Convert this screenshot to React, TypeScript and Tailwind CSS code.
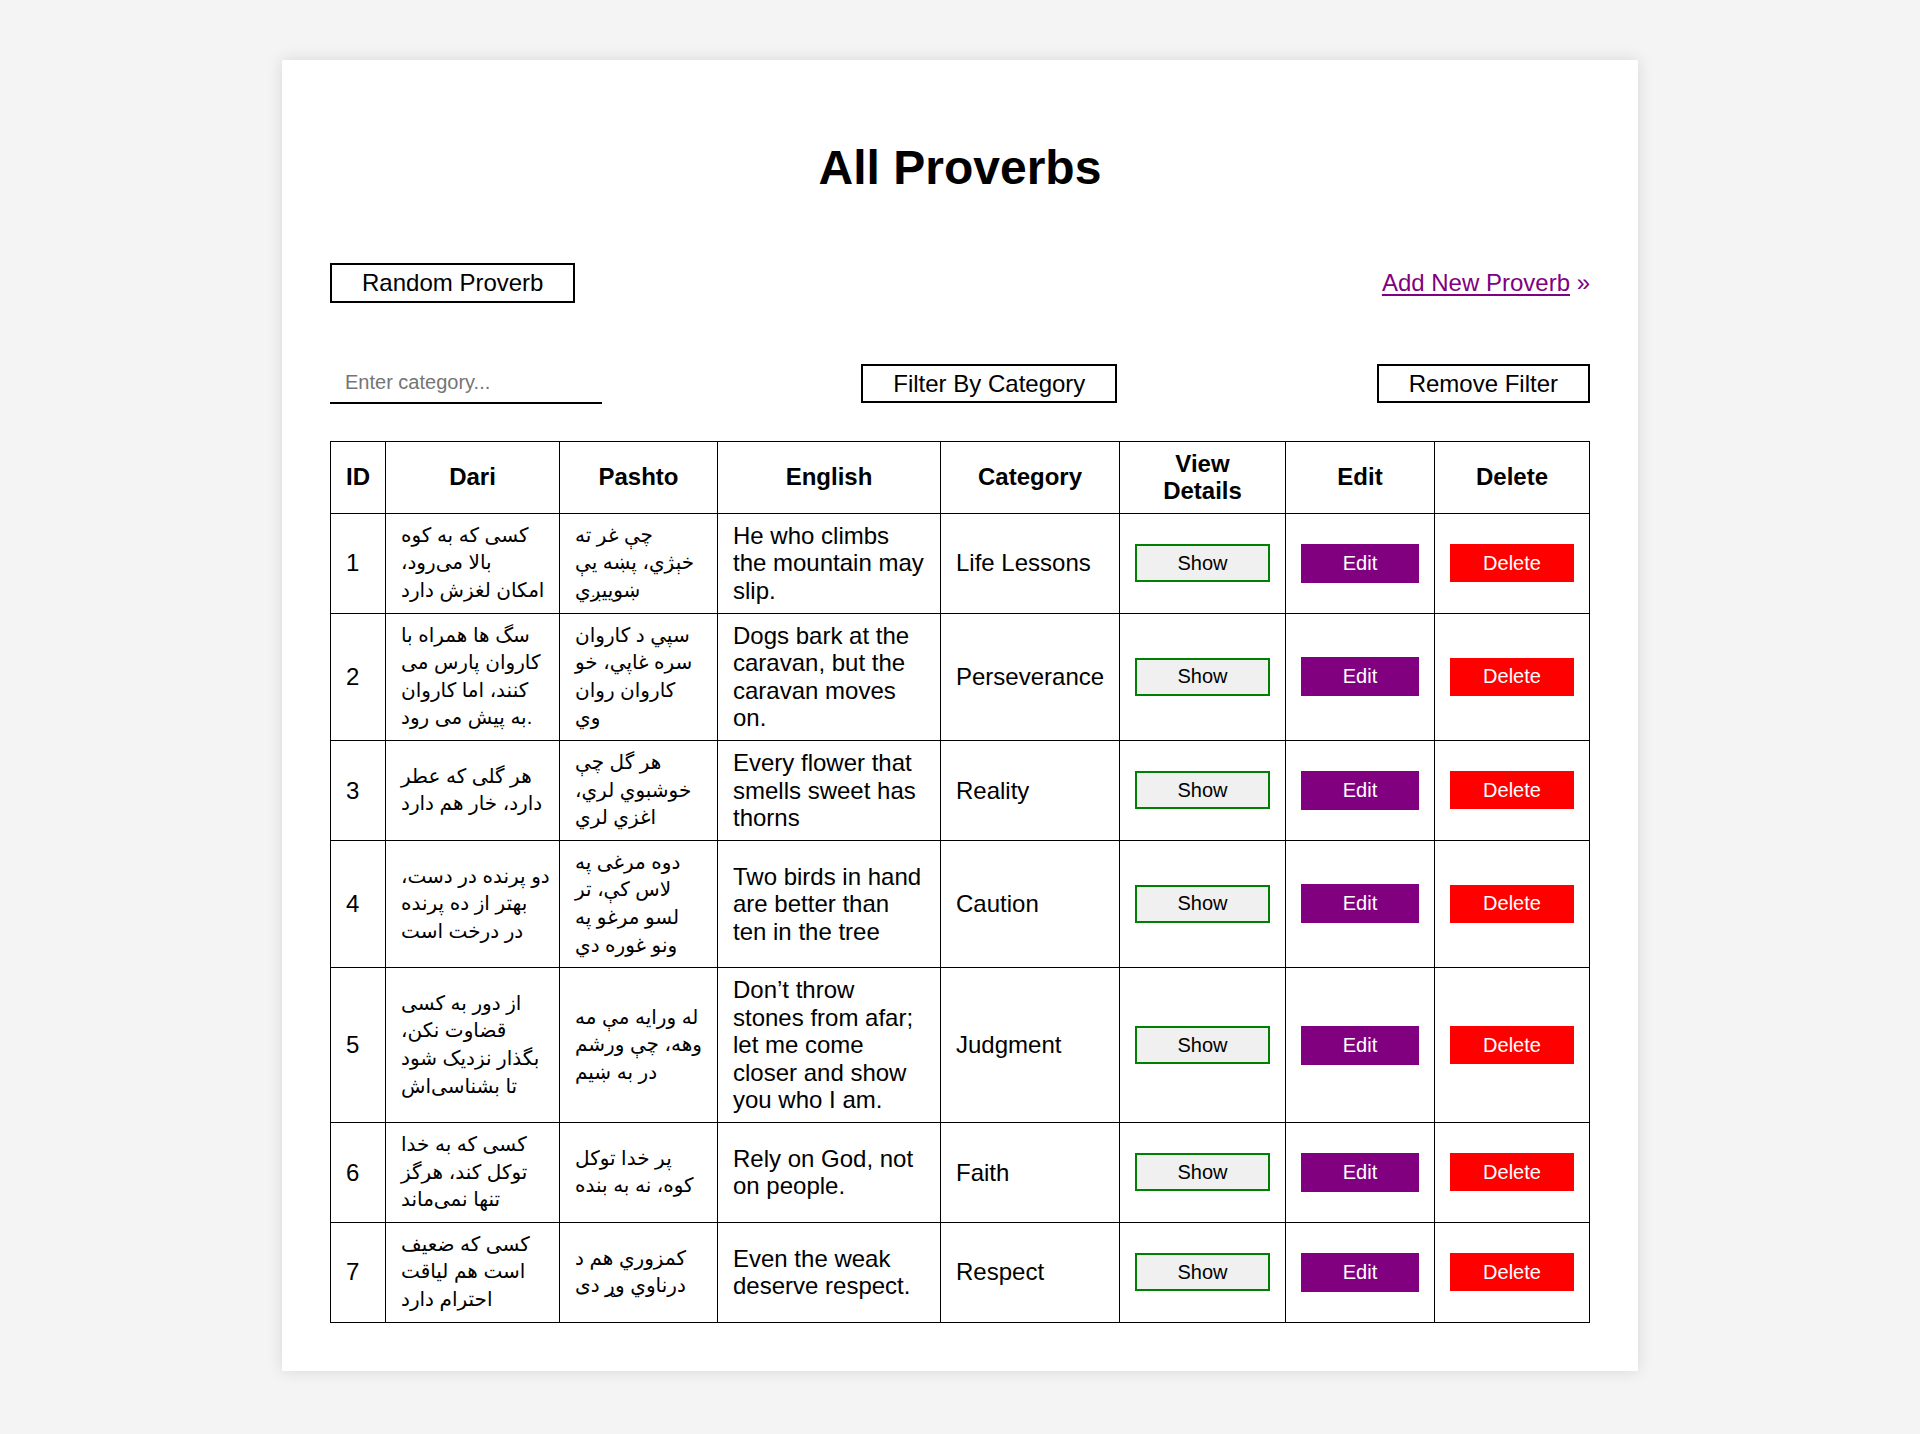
import React from "react";

type Proverb = {
  id: number;
  dari: string[];
  pashto: string[];
  english: string;
  category: string;
};

const proverbs: Proverb[] = [
  {
    id: 1,
    dari: ["کسی که به کوه", "بالا می‌رود،", "امکان لغزش دارد"],
    pashto: ["چې غر ته", "خېژي، پښه یې", "ښوییږي"],
    english: "He who climbs the mountain may slip.",
    category: "Life Lessons",
  },
  {
    id: 2,
    dari: ["سگ ها همراه با", "کاروان پارس می", "کنند، اما کاروان", "به پیش می رود."],
    pashto: ["سپي د کاروان", "سره غاپي، خو", "کاروان روان", "وي"],
    english: "Dogs bark at the caravan, but the caravan moves on.",
    category: "Perseverance",
  },
  {
    id: 3,
    dari: ["هر گلی که عطر", "دارد، خار هم دارد"],
    pashto: ["هر گل چې", "خوشبوي لري،", "اغزي لري"],
    english: "Every flower that smells sweet has thorns",
    category: "Reality",
  },
  {
    id: 4,
    dari: ["دو پرنده در دست،", "بهتر از ده پرنده", "در درخت است"],
    pashto: ["دوه مرغی په", "لاس کې، تر", "لسو مرغو په", "ونو غوره دي"],
    english: "Two birds in hand are better than ten in the tree",
    category: "Caution",
  },
  {
    id: 5,
    dari: ["از دور به کسی", "قضاوت نکن،", "بگذار نزدیک شود", "تا بشناسی‌اش"],
    pashto: ["له ورایه مې مه", "وهه، چې ورشم", "در به ښیم"],
    english: "Don’t throw stones from afar; let me come closer and show you who I am.",
    category: "Judgment",
  },
  {
    id: 6,
    dari: ["کسی که به خدا", "توکل کند، هرگز", "تنها نمی‌ماند"],
    pashto: ["پر خدا توکل", "کوه، نه به بنده"],
    english: "Rely on God, not on people.",
    category: "Faith",
  },
  {
    id: 7,
    dari: ["کسی که ضعیف", "است هم لیاقت", "احترام دارد"],
    pashto: ["کمزوري هم د", "درناوي وړ دی"],
    english: "Even the weak deserve respect.",
    category: "Respect",
  },
];

// one line per row of the cell; a trailing full stop stays outside the rtl run
const ArabicLines = ({ lines }: { lines: string[] }) => (
  <div className="text-[20px]">
    {lines.map((line, i) => {
      const dot = line.endsWith(".");
      const body = dot ? line.slice(0, -1) : line;
      return (
        <div key={i} className="whitespace-nowrap h-[27.6px] leading-[27.6px]">
          <span dir="rtl">{body}</span>
          {dot && "."}
        </div>
      );
    })}
  </div>
);

const th = "border border-black px-[15px] py-2 font-bold text-center align-middle";
const td = "border border-black px-[15px] py-2 align-middle text-left";

const App = () => {
  return (
    <div
      className="min-h-screen bg-[#f4f4f4] py-[60px] text-black"
      style={{ fontFamily: '"Liberation Sans", Arial, "DejaVu Sans", sans-serif' }}
    >
      <div className="w-[1356px] mx-auto bg-white p-12 shadow-[0_0_15px_rgba(0,0,0,0.12)]">
        <h1 className="mt-8 mb-[68px] text-center text-[48px] leading-[55px] font-bold">
          All Proverbs
        </h1>

        <div className="flex justify-between items-center text-[24px] leading-[27.6px]">
          <button className="border-2 border-black bg-white px-[30px] py-1 leading-[27.6px]">
            Random Proverb
          </button>
          <a href="#" className="text-[24px] text-[#800080]">
            <span className="underline underline-offset-[3px] decoration-2">Add New Proverb</span> »
          </a>
        </div>

        <div className="flex justify-between items-center mt-[61px] text-[24px]">
          <input
            type="text"
            placeholder="Enter category..."
            className="w-[272px] h-[40px] pl-[15px] text-[20px] border-b-2 border-black outline-none placeholder:text-[#757575]"
          />
          <button className="border-2 border-black bg-white px-[30px] py-1 leading-[27.6px]">
            Filter By Category
          </button>
          <button className="border-2 border-black bg-white px-[30px] py-1 leading-[27.6px]">
            Remove Filter
          </button>
        </div>

        <table className="w-full mt-[37px] table-fixed border-collapse text-[24px] leading-[27.6px]">
          <colgroup>
            <col className="w-[55px]" />
            <col className="w-[174px]" />
            <col className="w-[158px]" />
            <col className="w-[223px]" />
            <col className="w-[179px]" />
            <col className="w-[166px]" />
            <col className="w-[149px]" />
            <col className="w-[155px]" />
          </colgroup>
          <thead>
            <tr>
              <th className={th}>ID</th>
              <th className={th}>Dari</th>
              <th className={th}>Pashto</th>
              <th className={th}>English</th>
              <th className={th}>Category</th>
              <th className={th}>View Details</th>
              <th className={th}>Edit</th>
              <th className={th}>Delete</th>
            </tr>
          </thead>
          <tbody>
            {proverbs.map((p) => (
              <tr key={p.id}>
                <td className={td}>{p.id}</td>
                <td className={td}>
                  <ArabicLines lines={p.dari} />
                </td>
                <td className={td}>
                  <ArabicLines lines={p.pashto} />
                </td>
                <td className={td}>{p.english}</td>
                <td className={td}>{p.category}</td>
                <td className={td}>
                  <button className="w-full h-[38px] border-2 border-[#008000] bg-[#f0f0f0] text-[20px] leading-[23px]">
                    Show
                  </button>
                </td>
                <td className={td}>
                  <button className="w-full h-[39px] bg-[#800080] text-white text-[20px] leading-[23px]">
                    Edit
                  </button>
                </td>
                <td className={td}>
                  <button className="w-full h-[38px] bg-[#ff0000] text-white text-[20px] leading-[23px]">
                    Delete
                  </button>
                </td>
              </tr>
            ))}
          </tbody>
        </table>
      </div>
    </div>
  );
};

export default App;
